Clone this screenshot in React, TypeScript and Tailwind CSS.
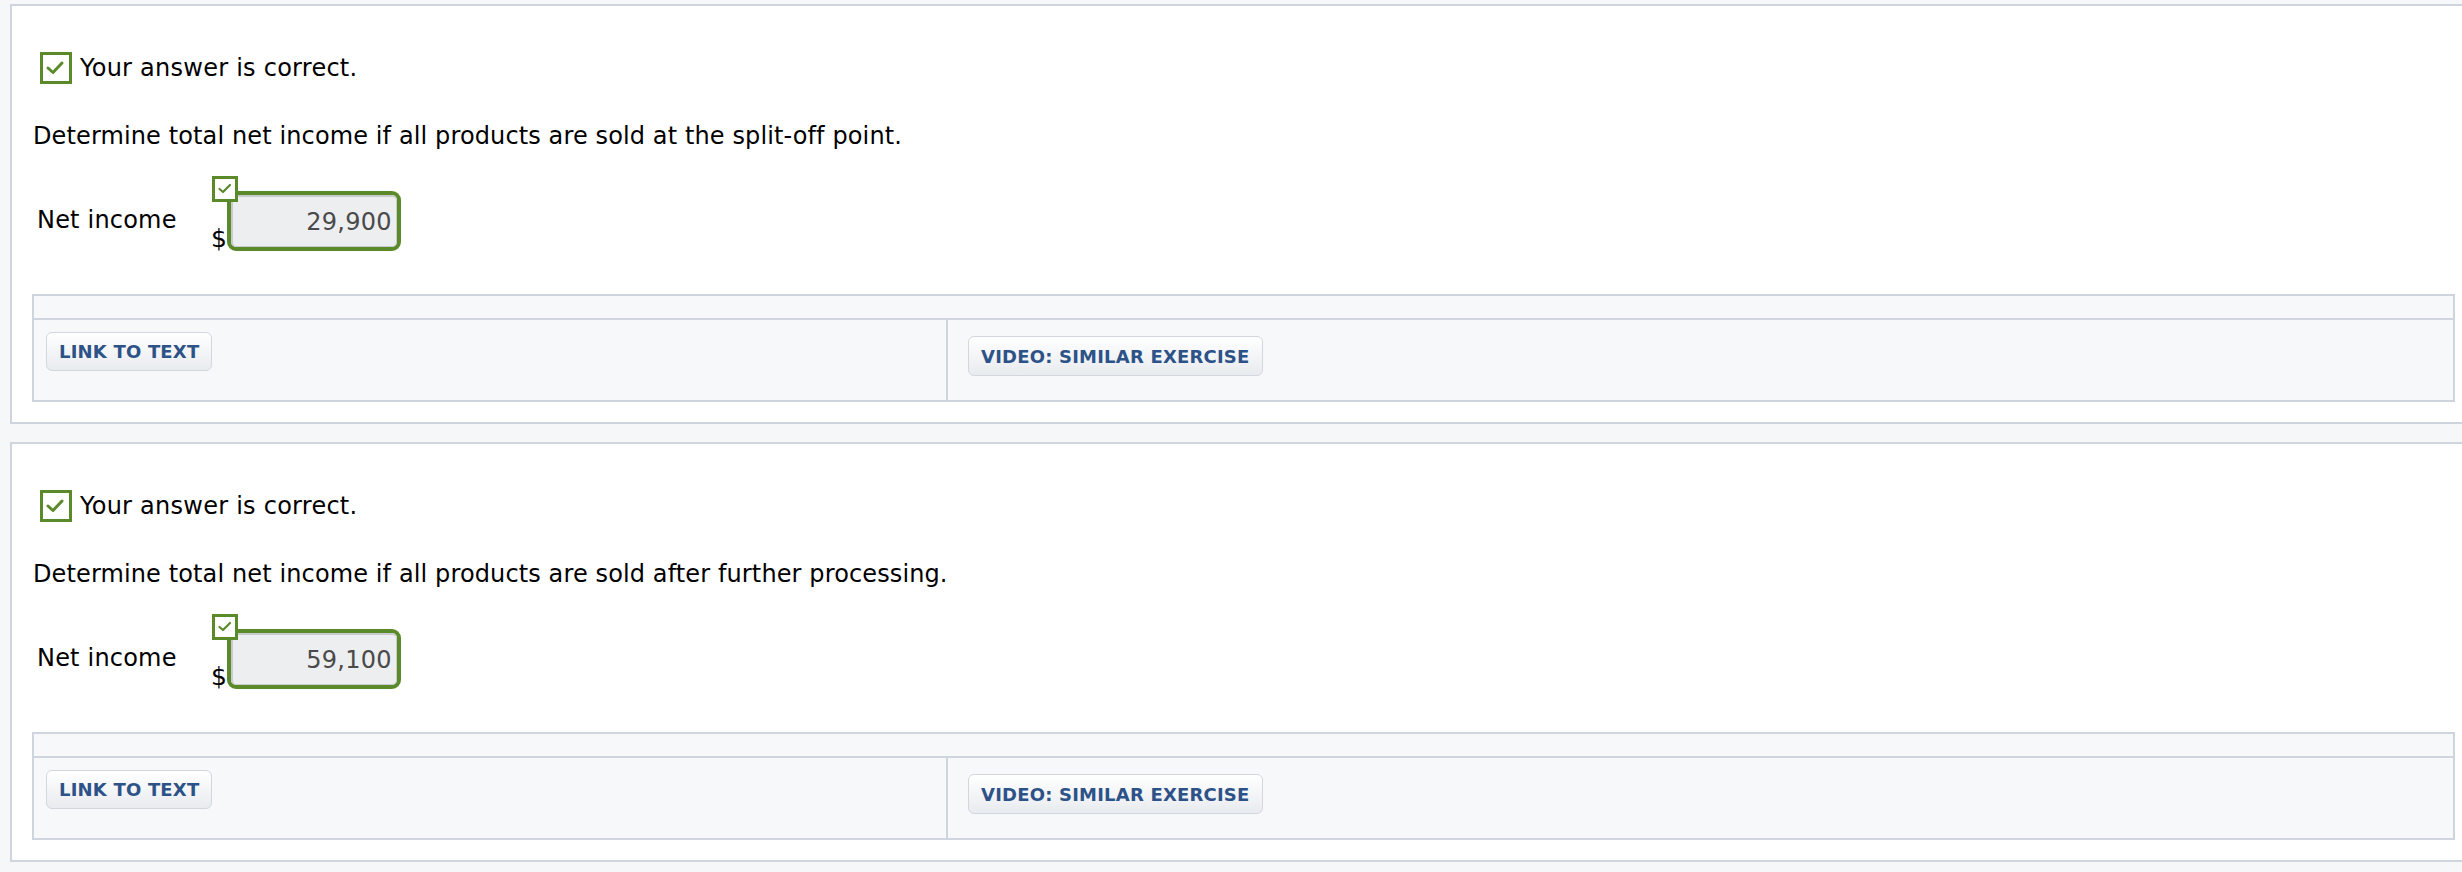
import React from "react";

const font = { fontFamily: '"DejaVu Sans", Verdana, sans-serif' };

function BigCheck() {
  return (
    <div className="w-[32px] h-[32px] border-[3px] border-[#5b8a2b] bg-white flex items-center justify-center shrink-0">
      <svg width="26" height="26" viewBox="0 0 26 26">
        <polyline points="5,13 10,17.5 19,8" fill="none" stroke="#5b8a2b" strokeWidth="3" strokeLinecap="round" strokeLinejoin="round" />
      </svg>
    </div>
  );
}

function SmallCheck() {
  return (
    <div className="absolute left-[1px] top-0 w-[26px] h-[26px] border-[3px] border-[#5b8a2b] bg-white flex items-center justify-center z-10">
      <svg width="20" height="20" viewBox="0 0 20 20">
        <polyline points="4.5,10 8,13 15,6" fill="none" stroke="#5b8a2b" strokeWidth="2.2" strokeLinecap="round" strokeLinejoin="round" />
      </svg>
    </div>
  );
}

function Btn({ children, className }: { children: React.ReactNode; className?: string }) {
  return (
    <div
      className={
        "inline-flex items-center h-[39px] px-[12px] rounded-[6px] border border-[#d2d7de] bg-gradient-to-b from-white to-[#e8ebef] text-[#2d5288] font-bold text-[18px] tracking-[0.2px] whitespace-nowrap shadow-[inset_0_1px_0_#ffffff] " +
        (className ?? "")
      }
    >
      {children}
    </div>
  );
}

function Panel({ question, value }: { question: string; value: string }) {
  return (
    <div className="ml-[10px] border-2 border-r-0 border-[#cfd5df] bg-white pt-[46px] pb-[20px]">
      <div className="flex items-center ml-[28px] gap-[8px]">
        <BigCheck />
        <span className="text-[24px] leading-[32px] tracking-[0.25px] text-black">Your answer is correct.</span>
      </div>
      <div className="mt-[36px] ml-[21px] text-[24px] leading-[32px] tracking-[0.12px] text-black">{question}</div>
      <div className="mt-[24px] flex items-start">
        <div className="w-[174px] ml-[25px] pt-[28px] text-[24px] leading-[32px] tracking-[0.2px] text-black">Net income</div>
        <div className="relative flex items-end pt-[15px]">
          <SmallCheck />
          <span className="text-[25px] leading-[24px] text-black">$</span>
          <div className="w-[174px] h-[60px] border-[4px] border-[#5b8a2b] rounded-[9px] bg-[#eceef0]">
            <div className="w-full h-full rounded-[5px] border-t-2 border-l-2 border-r border-b border-[#c9cbce] flex items-center justify-end pr-[4px] text-[24px] tracking-[0.3px] text-[#4a4a4a]">
              {value}
            </div>
          </div>
        </div>
      </div>
      <div className="mt-[43px] ml-[20px] mr-[7px] border-2 border-[#cfd5df] bg-[#f7f8fa]">
        <div className="h-[24px] border-b-2 border-[#cfd5df]" />
        <div className="flex h-[80px]">
          <div className="w-[914px] border-r-2 border-[#cfd5df] pl-[12px] pt-[12px]">
            <Btn>LINK TO TEXT</Btn>
          </div>
          <div className="flex-1 pl-[20px] pt-[16px]">
            <Btn className="h-[40px]">VIDEO: SIMILAR EXERCISE</Btn>
          </div>
        </div>
      </div>
    </div>
  );
}

export default function App() {
  return (
    <div className="w-[2462px] h-[872px] overflow-hidden bg-[#f6f7f9] pt-[4px]" style={font}>
      <Panel question="Determine total net income if all products are sold at the split-off point." value="29,900" />
      <div className="h-[18px]" />
      <Panel question="Determine total net income if all products are sold after further processing." value="59,100" />
    </div>
  );
}
